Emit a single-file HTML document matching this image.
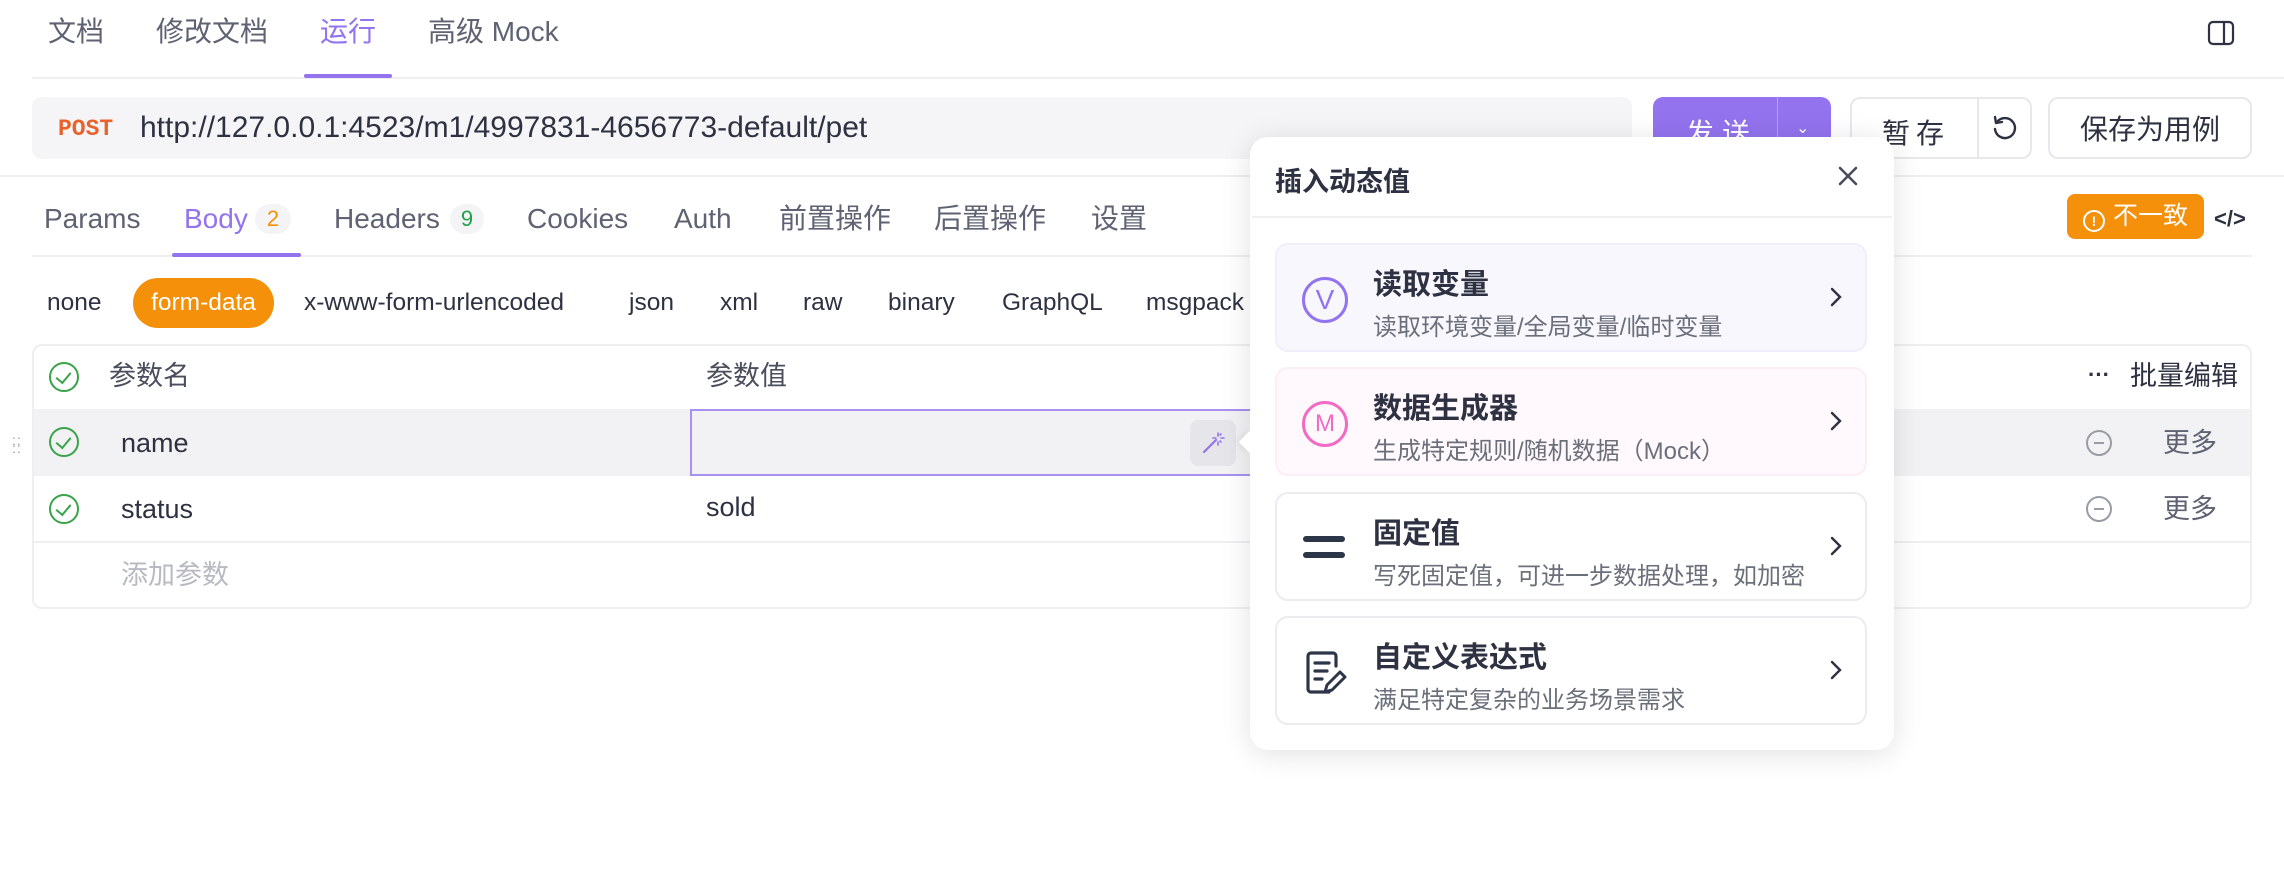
<!DOCTYPE html>
<html><head><meta charset="utf-8"><style>
*{box-sizing:border-box;margin:0;padding:0}
body{width:2284px;height:878px;background:#fff;font-family:"Liberation Sans","Noto Sans CJK SC",sans-serif;color:#2d3141;position:relative;overflow:hidden}
.a{position:absolute;white-space:nowrap}
.t{font-size:27px;color:#5e6272;line-height:1}
.tt{font-size:28px;color:#5e6272;line-height:1}
.bt{font-size:24.5px;color:#2d3141;line-height:1}
.line{position:absolute;height:2px;background:#efeff2}
.btn{position:absolute;border:2px solid #e8e8ec;border-radius:10px;background:#fff;font-size:28px;color:#2d3141;display:flex;align-items:center;justify-content:center}
.chk{position:absolute;width:30px;height:30px;border:2.5px solid #3aa34a;border-radius:50%}
.chk:after{content:"";position:absolute;left:8px;top:5px;width:7px;height:12px;border:solid #3aa34a;border-width:0 2.5px 2.5px 0;transform:rotate(40deg)}
.card{position:absolute;left:1275px;width:592px;height:109px;border:2px solid #ececf0;border-radius:13px;background:#fff}
.card .ti{position:absolute;left:96px;top:16px;font-size:29px;font-weight:bold;color:#2d3141}
.card .su{position:absolute;left:96px;top:62px;font-size:24px;color:#6b6f7a}
.card .ch{position:absolute;right:22px;top:40px}
.minus{position:absolute;width:26px;height:26px;border:2px solid #9a9ca5;border-radius:50%}
.minus:after{content:"";position:absolute;left:6px;top:10px;width:10px;height:2px;background:#9a9ca5}
</style></head><body>
<div class="a tt" style="left:48px;top:18px">文档</div>
<div class="a tt" style="left:156px;top:18px">修改文档</div>
<div class="a tt" style="left:320px;top:18px;color:#9373ee">运行</div>
<div class="a tt" style="left:428px;top:18px">高级 Mock</div>
<div class="line" style="left:32px;right:0;top:77px"></div>
<div class="a" style="left:304px;top:74px;width:88px;height:4px;background:#9373ee;border-radius:2px"></div>
<svg class="a" style="left:2207px;top:19px" width="28" height="28" viewBox="0 0 28 28"><rect x="2" y="3" width="24" height="22" rx="4" fill="none" stroke="#2d3141" stroke-width="2.2"/><line x1="17" y1="3" x2="17" y2="25" stroke="#2d3141" stroke-width="2.2"/></svg>

<div class="a" style="left:32px;top:97px;width:1600px;height:62px;background:#f5f5f7;border-radius:10px"></div>
<div class="a" style="left:58px;top:116px;font-family:'Liberation Mono',monospace;font-weight:bold;font-size:23px;color:#e8632c">POST</div>
<div class="a" style="left:140px;top:111px;font-size:30px;color:#2d3141">http://127.0.0.1:4523/m1/4997831-4656773-default/pet</div>
<div class="a" style="left:1653px;top:97px;width:178px;height:62px;background:#9373ee;border-radius:10px"></div>
<div class="a" style="left:1777px;top:97px;width:1px;height:62px;background:#b7a3f5"></div>
<div class="a" style="left:1686px;top:112px;font-size:28px;color:#fff;letter-spacing:8px">发送</div>
<div class="a" style="left:1796px;top:118px;color:#fff;font-size:16px">⌄</div>
<div class="btn" style="left:1850px;top:97px;width:182px;height:62px"></div>
<div class="a" style="left:1977px;top:99px;width:2px;height:58px;background:#e8e8ec"></div>
<div class="a" style="left:1882px;top:112px;font-size:28px;letter-spacing:6px">暂存</div>
<svg class="a" style="left:1990px;top:113px" width="30" height="30" viewBox="0 0 30 30"><path d="M7 9 A10 10 0 1 1 5 16" fill="none" stroke="#2d3141" stroke-width="2.4" stroke-linecap="round"/><path d="M5 4 L6 10 L12 9" fill="none" stroke="#2d3141" stroke-width="2.4" stroke-linecap="round" stroke-linejoin="round"/></svg>
<div class="btn" style="left:2048px;top:97px;width:204px;height:62px">保存为用例</div>
<div class="line" style="left:0;right:0;top:175px"></div>

<div class="a tt" style="left:44px;top:205px">Params</div>
<div class="a tt" style="left:184px;top:205px;color:#9373ee">Body</div>
<div class="a" style="left:255px;top:204px;width:36px;height:30px;border-radius:15px;background:#f4f4f6;color:#f5900b;font-size:22px;text-align:center;line-height:30px">2</div>
<div class="a tt" style="left:334px;top:205px">Headers</div>
<div class="a" style="left:450px;top:204px;width:34px;height:30px;border-radius:15px;background:#f4f4f6;color:#22a04b;font-size:22px;text-align:center;line-height:30px">9</div>
<div class="a tt" style="left:527px;top:205px">Cookies</div>
<div class="a tt" style="left:674px;top:205px">Auth</div>
<div class="a tt" style="left:779px;top:205px">前置操作</div>
<div class="a tt" style="left:934px;top:205px">后置操作</div>
<div class="a tt" style="left:1091px;top:205px">设置</div>
<div class="line" style="left:32px;right:32px;top:255px"></div>
<div class="a" style="left:172px;top:253px;width:129px;height:4px;background:#9373ee;border-radius:2px"></div>
<div class="a" style="left:2067px;top:194px;width:137px;height:45px;background:#f5900b;border-radius:8px;color:#fff;font-size:25px;line-height:45px;padding-left:16px"><span style="display:inline-block;width:22px;height:22px;border:2px solid #fff;border-radius:50%;font-size:14px;line-height:18px;text-align:center;vertical-align:-2px;margin-right:8px;font-weight:bold">!</span>不一致</div>
<div class="a" style="left:2214px;top:206px;font-size:22px;font-weight:bold;color:#2d3141">&lt;/&gt;</div>

<div class="a bt" style="left:47px;top:291px">none</div>
<div class="a" style="left:133px;top:278px;width:141px;height:50px;background:#f5900b;border-radius:25px;color:#fff;font-size:24.5px;line-height:50px;text-align:center">form-data</div>
<div class="a bt" style="left:304px;top:291px">x-www-form-urlencoded</div>
<div class="a bt" style="left:629px;top:291px">json</div>
<div class="a bt" style="left:720px;top:291px">xml</div>
<div class="a bt" style="left:803px;top:291px">raw</div>
<div class="a bt" style="left:888px;top:291px">binary</div>
<div class="a bt" style="left:1002px;top:291px">GraphQL</div>
<div class="a bt" style="left:1146px;top:291px">msgpack</div>

<div class="a" style="left:32px;top:344px;width:2220px;height:265px;border:2px solid #efeff2;border-radius:10px"></div>
<div class="a" style="left:34px;top:409px;width:2216px;height:67px;background:#f2f2f4"></div>
<div class="line" style="left:34px;width:2216px;top:541px"></div>
<div class="chk" style="left:49px;top:362px"></div>
<div class="chk" style="left:49px;top:427px"></div>
<div class="chk" style="left:49px;top:494px"></div>
<div class="a" style="left:12px;top:436px;color:#9a9ca5;font-size:14px;line-height:8px;letter-spacing:1px">::<br>::</div>
<div class="a t" style="left:109px;top:363px;color:#4a4e5c">参数名</div>
<div class="a t" style="left:706px;top:363px;color:#4a4e5c">参数值</div>
<div class="a t" style="left:121px;top:430px;color:#2d3141">name</div>
<div class="a t" style="left:121px;top:496px;color:#2d3141">status</div>
<div class="a t" style="left:706px;top:494px;color:#2d3141">sold</div>
<div class="a t" style="left:121px;top:562px;color:#b8bac2">添加参数</div>
<div class="a" style="left:690px;top:409px;width:570px;height:67px;border:2px solid #a890f0"></div>
<div class="a" style="left:1190px;top:420px;width:46px;height:46px;background:#e6e6ea;border-radius:8px"></div>
<svg class="a" style="left:1200px;top:430px" width="26" height="26" viewBox="0 0 26 26"><path d="M4 22 L16 10" stroke="#9373ee" stroke-width="2.2" stroke-linecap="round"/><path d="M18 3v3M18 12v3M13 8h3M21 8h3M21 4l-1 1M14 12l1-1M21 12l-1-1" stroke="#9373ee" stroke-width="1.6" stroke-linecap="round"/></svg>
<div class="a" style="left:2088px;top:362px;font-size:22px;font-weight:bold">···</div>
<div class="a t" style="left:2130px;top:363px;color:#2d3141">批量编辑</div>
<div class="minus" style="left:2086px;top:430px"></div>
<div class="minus" style="left:2086px;top:496px"></div>
<div class="a t" style="left:2163px;top:430px">更多</div>
<div class="a t" style="left:2163px;top:496px">更多</div>

<div class="a" style="left:1250px;top:137px;width:644px;height:613px;background:#fff;border-radius:18px;box-shadow:0 4px 30px rgba(0,0,0,.12)"></div>
<div class="a" style="left:1242px;top:434px;width:16px;height:16px;background:#fff;transform:rotate(45deg);box-shadow:-3px 3px 6px rgba(0,0,0,.05)"></div>
<div class="a" style="left:1275px;top:160px;font-size:27px;font-weight:bold;color:#2d3141">插入动态值</div>
<svg class="a" style="left:1836px;top:164px" width="24" height="24" viewBox="0 0 24 24"><path d="M4 4L20 20M20 4L4 20" stroke="#4a4e5c" stroke-width="2.6" stroke-linecap="round"/></svg>
<div class="a" style="left:1252px;top:216px;width:640px;height:2px;background:#f0f0f3"></div>

<div class="card" style="top:243px;background:#f8f7fe;border-color:#f0eefb">
<div class="a" style="left:25px;top:32px;width:46px;height:46px;border:3.5px solid #9373ee;border-radius:50%;color:#9373ee;font-size:28px;text-align:center;line-height:39px">V</div>
<div class="ti">读取变量</div><div class="su">读取环境变量/全局变量/临时变量</div>
<svg class="ch" width="14" height="24" viewBox="0 0 14 24"><path d="M3 4l8 8-8 8" fill="none" stroke="#2d3141" stroke-width="2.4" stroke-linecap="round"/></svg></div>
<div class="card" style="top:367px;background:#fff8fc;border-color:#fbeef5">
<div class="a" style="left:25px;top:32px;width:46px;height:46px;border:3.5px solid #ef6bc4;border-radius:50%;color:#ef6bc4;font-size:24px;text-align:center;line-height:39px">M</div>
<div class="ti">数据生成器</div><div class="su">生成特定规则/随机数据（Mock）</div>
<svg class="ch" width="14" height="24" viewBox="0 0 14 24"><path d="M3 4l8 8-8 8" fill="none" stroke="#2d3141" stroke-width="2.4" stroke-linecap="round"/></svg></div>
<div class="card" style="top:492px">
<div class="a" style="left:26px;top:42px;width:42px;height:6px;background:#2d3648;border-radius:3px"></div>
<div class="a" style="left:26px;top:58px;width:42px;height:6px;background:#2d3648;border-radius:3px"></div>
<div class="ti">固定值</div><div class="su">写死固定值，可进一步数据处理，如加密</div>
<svg class="ch" width="14" height="24" viewBox="0 0 14 24"><path d="M3 4l8 8-8 8" fill="none" stroke="#2d3141" stroke-width="2.4" stroke-linecap="round"/></svg></div>
<div class="card" style="top:616px">
<svg class="a" style="left:26px;top:30px" width="44" height="50" viewBox="0 0 44 50"><path d="M26 44H8a3 3 0 0 1-3-3V8a3 3 0 0 1 3-3h22a3 3 0 0 1 3 3v10" fill="none" stroke="#2d3648" stroke-width="3.2" stroke-linecap="round"/><path d="M12 15h14M12 23h12M12 31h7" stroke="#2d3648" stroke-width="3.2" stroke-linecap="round"/><path d="M22 44l2-7 13-13 5 5-13 13z" fill="none" stroke="#2d3648" stroke-width="3" stroke-linejoin="round"/></svg>
<div class="ti">自定义表达式</div><div class="su">满足特定复杂的业务场景需求</div>
<svg class="ch" width="14" height="24" viewBox="0 0 14 24"><path d="M3 4l8 8-8 8" fill="none" stroke="#2d3141" stroke-width="2.4" stroke-linecap="round"/></svg></div>
</body></html>
